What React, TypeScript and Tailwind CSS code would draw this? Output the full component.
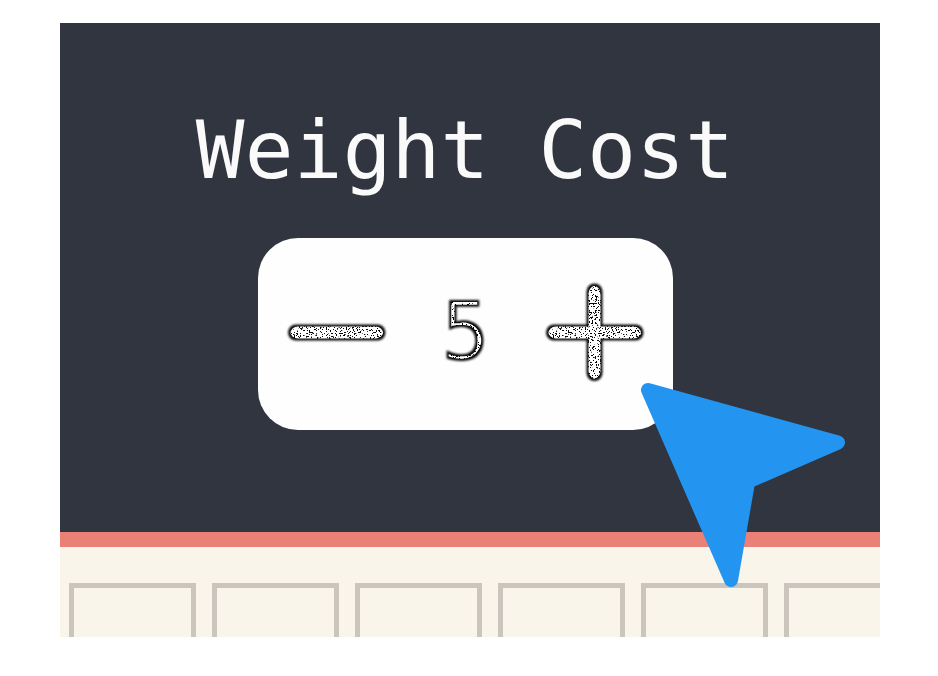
const cells = [0, 1, 2, 3, 4, 5];

function GrainFilter() {
  return (
    <svg width="0" height="0" className="absolute" aria-hidden="true">
      <filter id="grain-icon" x="-10%" y="-20%" width="120%" height="140%" colorInterpolationFilters="sRGB">
        <feMorphology in="SourceAlpha" operator="erode" radius="2" result="core" />
        <feTurbulence type="fractalNoise" baseFrequency="0.7" numOctaves="2" seed="4" result="noise" />
        <feColorMatrix in="noise" type="matrix" values="0 0 0 0 1  0 0 0 0 1  0 0 0 0 1  40 0 0 0 -15.4" result="dots" />
        <feComposite in="dots" in2="core" operator="in" result="grain" />
        <feGaussianBlur in="SourceGraphic" stdDeviation="0.9" result="soft" />
        <feMerge>
          <feMergeNode in="soft" />
          <feMergeNode in="grain" />
        </feMerge>
      </filter>
      <filter id="grain-text" x="-20%" y="-10%" width="140%" height="120%" colorInterpolationFilters="sRGB">
        <feMorphology in="SourceAlpha" operator="erode" radius="2" result="core" />
        <feTurbulence type="fractalNoise" baseFrequency="0.8" numOctaves="2" seed="9" result="noise" />
        <feColorMatrix in="noise" type="matrix" values="0 0 0 0 1  0 0 0 0 1  0 0 0 0 1  40 0 0 0 -14" result="dots" />
        <feComposite in="dots" in2="core" operator="in" result="grain" />
        <feGaussianBlur in="SourceGraphic" stdDeviation="1.1" result="soft" />
        <feMerge>
          <feMergeNode in="soft" />
          <feMergeNode in="grain" />
        </feMerge>
      </filter>
    </svg>
  );
}

function StepIcon({ plus = false }: { plus?: boolean }) {
  return (
    <svg width="120" height="120" viewBox="0 0 120 120" fill="none" stroke="#08080b" strokeWidth="16" strokeLinecap="round">
      <g filter="url(#grain-icon)">
        <rect width="120" height="120" stroke="none" />
        <path d={plus ? "M19 60.5H100.5M59.5 19.5V101" : "M20 60.5H101.5"} />
      </g>
    </svg>
  );
}

export default function App() {
  return (
    <div className="h-[676px] w-[938px] overflow-hidden bg-white pt-[23px] pl-[60px] font-['DejaVu_Sans_Mono',monospace]">
      <GrainFilter />
      <div className="relative flex h-[614px] w-[820px] flex-col overflow-hidden bg-[#f9f5eb]">
        <section className="flex h-[509px] shrink-0 flex-col items-center bg-[#30353f] pt-[79px] pr-[9px]">
          <h1 className="mr-[1px] text-[81px] leading-[96px] font-normal tracking-[0.17px] whitespace-nowrap text-[#fafafa]">Weight Cost</h1>
          <div className="mt-10 flex h-[192px] w-[415px] items-center justify-between rounded-[40px] bg-[#fefefe] px-[18px] pb-1">
            <button aria-label="Decrease"><StepIcon /></button>
            <span className="text-[81.3px] leading-[96px] text-black [filter:url(#grain-text)]">5</span>
            <button aria-label="Increase"><StepIcon plus /></button>
          </div>
        </section>
        <div className="h-[15px] shrink-0 bg-[#eb8076]" />
        <div className="flex gap-4 pt-9 pl-[9px]">
          {cells.map((cell) => (
            <div key={cell} className="h-[80px] w-[127px] shrink-0 border-5 border-[#cbc5be]" />
          ))}
        </div>
        <svg className="absolute top-[350px] left-[570px]" width="230" height="230" viewBox="630 373 230 230" aria-hidden="true">
          <path d="M648 390L838 442.5L748.2 481.6L731 580Z" fill="#2395f1" stroke="#2395f1" strokeWidth="14" strokeLinejoin="round" />
        </svg>
      </div>
    </div>
  );
}
